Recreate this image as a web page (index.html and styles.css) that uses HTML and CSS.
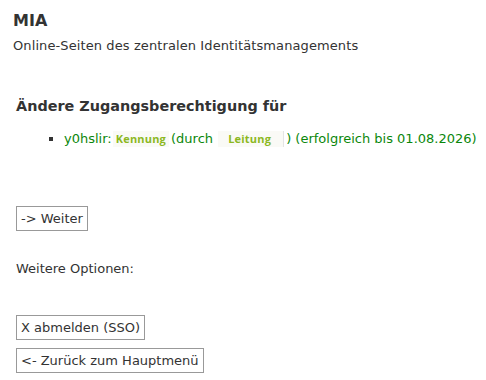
FILE: index.html
```html
<!DOCTYPE html>
<html lang="de">
<head>
<meta charset="utf-8">
<title>MIA</title>
<link rel="stylesheet" href="styles.css">
</head>
<body>
<header class="site-header">
  <div class="site-title">MIA</div>
  <div class="site-subtitle">Online-Seiten des zentralen Identitätsmanagements</div>
</header>
<main class="content">
  <h2 class="page-title">Ändere Zugangsberechtigung für</h2>
  <ul class="result-list">
    <li class="result-item">y0hslir:<span class="badge">Kennung</span>(durch <span class="badge badge-bordered">Leitung</span>) (erfolgreich bis 01.08.2026)</li>
  </ul>
  <div class="actions first">
    <button class="btn" type="button">-&gt; Weiter</button>
  </div>
  <p class="options-label">Weitere Optionen:</p>
  <div class="actions stack">
    <button class="btn" type="button">X abmelden (SSO)</button>
    <button class="btn" type="button">&lt;- Zurück zum Hauptmenü</button>
  </div>
</main>
</body>
</html>
```
FILE: styles.css
```css
html, body {
  margin: 0;
  padding: 0;
  background: #fff;
}
body {
  font-family: "DejaVu Sans", Verdana, sans-serif;
  font-size: 13px;
  color: #333;
  overflow: hidden;
}
.site-header {
  padding: 12px 13px 0;
}
.site-title {
  font-size: 16px;
  font-weight: bold;
  line-height: 18px;
}
.site-subtitle {
  margin-top: 8px;
  line-height: 16px;
  letter-spacing: 0.1px;
}
.content {
  padding: 0 16px;
}
.page-title {
  margin: 42px 0 0;
  font-size: 14.4px;
  font-weight: bold;
  line-height: 20px;
}
.result-list {
  margin: 14px 0 0;
  padding-left: 48px;
  list-style: square;
}
.result-item {
  color: #0b870b;
  line-height: 18px;
  letter-spacing: 0;
  white-space: nowrap;
}
.result-item::marker {
  color: #333;
  font-size: 13px;
}
.badge {
  display: inline-block;
  padding: 0 3px;
  background: #fafaf6;
  color: #8cb81f;
  font-size: 11px;
  font-weight: bold;
  font-family: "Open Sans", "DejaVu Sans", sans-serif;
  letter-spacing: 0.2px;
  line-height: 16px;
  margin: 0 2px 0 1px;
}
.badge-bordered {
  padding: 0 12px 0 10px;
  border-right: 1px solid #e4e4e4;
}
.actions {
  display: flex;
  flex-direction: column;
  align-items: flex-start;
  gap: 8px;
}
.actions.first {
  margin-top: 58px;
}
.btn {
  font-family: "DejaVu Sans", Verdana, sans-serif;
  font-size: 13px;
  color: #333;
  background: #fff;
  border: 1px solid #999;
  border-radius: 0;
  padding: 3px 4px;
  line-height: 17px;
  margin: 0;
}
.options-label {
  margin: 30px 0 0;
  line-height: 16px;
}
.actions.stack {
  margin-top: 38px;
}
```
